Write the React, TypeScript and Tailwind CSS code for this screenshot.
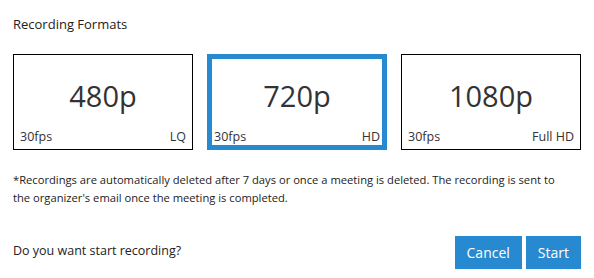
const formats = [
  { res: '480p', fps: '30fps', label: 'LQ', selected: false },
  { res: '720p', fps: '30fps', label: 'HD', selected: true },
  { res: '1080p', fps: '30fps', label: 'Full HD', selected: false },
];

export default function App() {
  return (
    <div className="w-[594px] h-[278px] bg-white px-[13px] pt-[14px] text-[#222] font-['Open_Sans',sans-serif]">
      <div className="text-[13px] leading-[20px]">Recording Formats</div>

      {/* format cards */}
      <div className="mt-[20px] grid grid-cols-3 gap-[14px]">
        {formats.map((f) => (
          <div
            key={f.res}
            className={
              f.selected
                ? 'h-[96px] flex flex-col border border-[#278ad0] ring-4 ring-inset ring-[#278ad0] cursor-pointer'
                : 'h-[96px] flex flex-col border border-black cursor-pointer'
            }
          >
            <div className="flex-1 flex items-center justify-center pt-[6px] text-[29px] leading-none text-[#333]">
              {f.res}
            </div>
            <div className="flex justify-between px-[6px] pb-[4px] text-[12.5px] leading-[16px] text-[#333]">
              <span>{f.fps}</span>
              <span>{f.label}</span>
            </div>
          </div>
        ))}
      </div>

      <p className="mt-[21px] text-[11.2px] leading-[18px] text-[#222] whitespace-nowrap">
        *Recordings are automatically deleted after 7 days or once a meeting is deleted. The recording is sent to
        <br />
        the organizer's email once the meeting is completed.
      </p>

      <div className="mt-[29px] flex items-center justify-between">
        <span className="text-[12.5px] leading-[20px] mb-[4px]">Do you want start recording?</span>
        <div className="flex gap-[4px]">
          <button className="h-[33px] px-3 bg-[#278ad0] text-white text-[14px] leading-[20px]">Cancel</button>
          <button className="h-[33px] px-3 bg-[#278ad0] text-white text-[14px] leading-[20px]">Start</button>
        </div>
      </div>
    </div>
  );
}
